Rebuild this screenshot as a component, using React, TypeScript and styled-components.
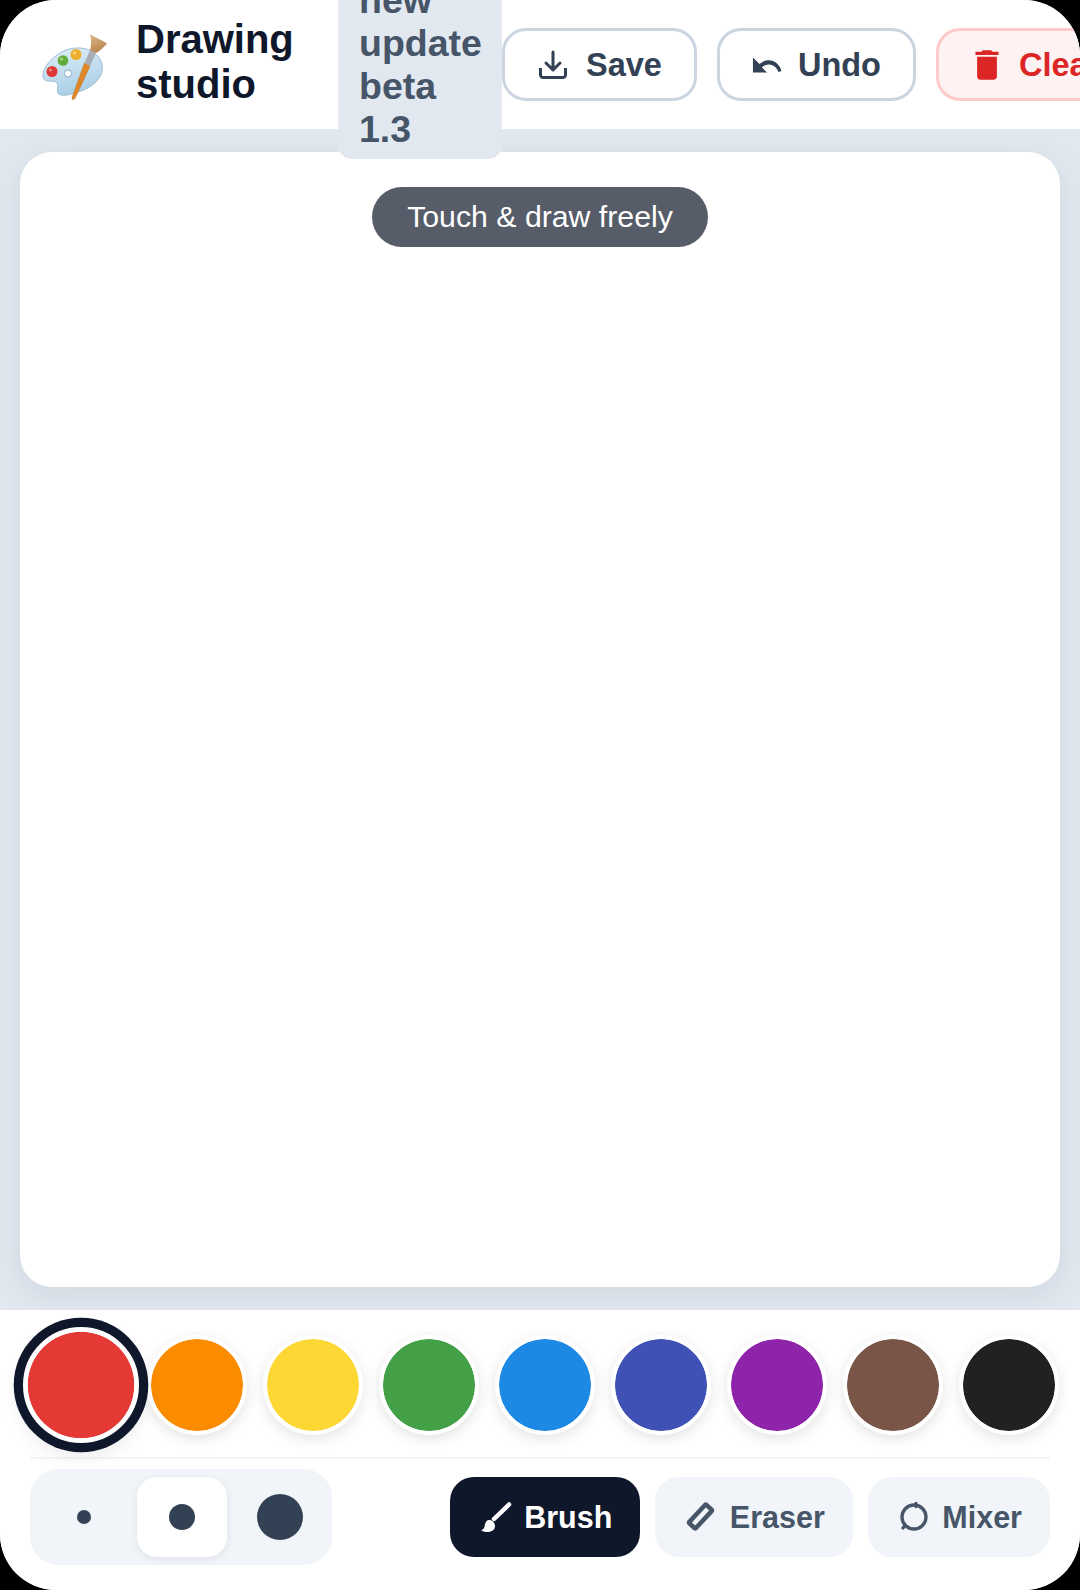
import styled, { createGlobalStyle } from "styled-components";

const colors = ['#e53935', '#fb8c00', '#fdd835', '#43a047', '#1e88e5', '#3f51b5', '#8e24aa', '#795548', '#212121']
const sizes = [14, 26, 46]

// style
const GlobalStyle = createGlobalStyle`
  * {
    box-sizing: border-box;
  }
  html, body {
    margin: 0;
    background: #000;
  }
  body {
    font-family: "Liberation Sans", Arial, sans-serif;
  }
`
const Screen = styled.div`
  display: flex;
  flex-direction: column;
  width: 1080px;
  height: 1590px;
  overflow: hidden;
  border-radius: 56px;
  background: #e2e8f0;
`
const Header = styled.header`
  display: flex;
  flex-shrink: 0;
  align-items: center;
  height: 129px;
  padding-left: 40px;
  background: #fff;
  position: relative;
  z-index: 2;
`
const Brand = styled.div`
  display: flex;
  flex-shrink: 0;
  align-items: center;
  gap: 26px;
  width: 298px;
`
const Title = styled.h1`
  margin: 0 0 5px;
  width: 150px;
  font-size: 40px;
  font-weight: 700;
  color: #0f172a;
`
const Badge = styled.div`
  flex-shrink: 0;
  width: 164px;
  padding: 8px 21px;
  border-radius: 14px;
  background: #e2e8f0;
  font-size: 37.500px;
  line-height: 43px;
  font-weight: 700;
  color: #475569;
`
const Actions = styled.div`
  display: flex;
  flex-shrink: 0;
  gap: 20px;
`
const ActionButton = styled.button<{ $danger?: boolean }>`
  display: flex;
  flex-shrink: 0;
  align-items: center;
  gap: 16px;
  height: 73px;
  padding: 1px 32px 0;
  border: 3px solid ${(p) => (p.$danger ? '#fecaca' : '#cbd5e1')};
  border-radius: 24px;
  background: ${(p) => (p.$danger ? '#fef2f2' : '#fff')};
  font: 700 32.500px "Liberation Sans", Arial, sans-serif;
  color: ${(p) => (p.$danger ? '#dc2626' : '#334155')};
`
const Main = styled.main`
  display: flex;
  flex: 1;
  min-height: 0;
  padding: 23px 20px 23px;
`
const Canvas = styled.div`
  flex: 1;
  display: flex;
  justify-content: center;
  align-items: flex-start;
  padding-top: 35px;
  border-radius: 32px;
  background: #fff;
  box-shadow: 0 8px 32px rgba(15, 23, 42, 0.08);
`
const Hint = styled.div`
  padding: 0 35px;
  height: 60px;
  line-height: 60px;
  border-radius: 30px;
  background: rgba(15, 23, 42, 0.7);
  font-size: 30.250px;
  color: #fff;
`
const Toolbar = styled.section`
  flex-shrink: 0;
  height: 280px;
  padding: 25px 30px 0;
  background: #fff;
  position: relative;
`
const Swatches = styled.div`
  display: flex;
  gap: 16px;
  height: 100px;
  margin-left: 1px;
`
const Swatch = styled.button<{ $color: string; $active?: boolean }>`
  flex-shrink: 0;
  width: 100px;
  height: 100px;
  padding: 0;
  border: 4.500px solid #fff;
  border-radius: 50%;
  background: ${(p) => p.$color};
  background-clip: padding-box;
  box-shadow: ${(p) => (p.$active ? '0 0 0 8px #0f172a, 0 8px 20px rgba(0, 0, 0, 0.12)' : '0 4px 14px rgba(0, 0, 0, 0.11)')};
  transform: ${(p) => (p.$active ? 'scale(1.16)' : 'none')};
`
const Controls = styled.div`
  display: flex;
  align-items: center;
  justify-content: space-between;
  margin-top: 22px;
  padding-top: 10px;
  border-top: 2px solid #f1f5f9;
`
const SizeGroup = styled.div`
  display: flex;
  gap: 8px;
  padding: 8px 7px 8px 9px;
  border-radius: 28px;
  background: #f1f5f9;
`
const SizeButton = styled.button<{ $active?: boolean }>`
  display: flex;
  align-items: center;
  justify-content: center;
  width: 90px;
  height: 80px;
  padding: 0;
  border: 0;
  border-radius: 20px;
  background: ${(p) => (p.$active ? '#fff' : 'transparent')};
  box-shadow: ${(p) => (p.$active ? '0 2px 8px rgba(0, 0, 0, 0.08)' : 'none')};
`
const Dot = styled.span<{ $size: number }>`
  width: ${(p) => p.$size}px;
  height: ${(p) => p.$size}px;
  border-radius: 50%;
  background: #334155;
`
const Tools = styled.div`
  display: flex;
  gap: 15px;
`
const ToolButton = styled.button<{ $active?: boolean }>`
  display: flex;
  align-items: center;
  gap: 12.500px;
  height: 80px;
  padding: 0 28px 0 30px;
  border: 0;
  border-radius: 24px;
  background: ${(p) => (p.$active ? '#0f172a' : '#f1f5f9')};
  font: 700 30.500px "Liberation Sans", Arial, sans-serif;
  color: ${(p) => (p.$active ? '#fff' : '#475569')};
`

const PaletteLogo = () => (
  <svg width="70" height="70" viewBox="8 10 70 70" aria-hidden="true">
    <defs>
      <linearGradient id="palette-body" x1="0.300" y1="0" x2="0.600" y2="1">
        <stop offset="0" stopColor="#dcedf7" />
        <stop offset="1" stopColor="#a6cde5" />
      </linearGradient>
      <linearGradient id="brush-hair" x1="0" y1="0" x2="0.300" y2="1">
        <stop offset="0" stopColor="#dcb88c" />
        <stop offset="1" stopColor="#b98651" />
      </linearGradient>
    </defs>
    <path d="M11 57C10 48 20 36 34 30 48 25 66 29 70 44 73 57 60 68 46 72 38 75 28 77 26 73 24 69 28 64 24 62 20 60 12 63 11 57Z" fill="url(#palette-body)" stroke="#9dbdd4" strokeWidth="1" />
    <circle cx="36" cy="53.500" r="3.600" fill="#fff" stroke="#8aa9c0" strokeWidth="1" />
    <circle cx="20" cy="51.500" r="5.500" fill="#dd3a36" />
    <circle cx="18.500" cy="50" r="1.500" fill="#f28a85" />
    <circle cx="31" cy="40.500" r="5.300" fill="#62ad39" />
    <circle cx="29.500" cy="39" r="1.500" fill="#a7d67f" />
    <circle cx="44" cy="34.500" r="5.500" fill="#eeae2c" />
    <circle cx="42.500" cy="33" r="1.600" fill="#f9da86" />
    <path d="M52.500 43L58 46 43 78.500 40.500 79.800 40 77.500Z" fill="#e0872a" stroke="#c26f1c" strokeWidth="0.500" />
    <path d="M58 30L64 33 58 46 52.500 43Z" fill="#a7adb4" />
    <path d="M58 30C59.500 25 59.500 19 58 14.500 63 17 70 20 75 23.500 72 27 68 31 64 33Z" fill="url(#brush-hair)" />
  </svg>
)

const SaveIcon = () => (
  <svg width="33" height="32" viewBox="0 0 33 32" fill="none" stroke="currentColor" strokeWidth="3" strokeLinejoin="round" aria-hidden="true">
    <path d="M3.500 19v7a2.500 2.500 0 0 0 2.500 2.500h20a2.500 2.500 0 0 0 2.500-2.500v-7" />
    <path d="M16 3v18M9 14l7 7 7-7" strokeLinecap="round" />
  </svg>
)
const UndoIcon = () => (
  <svg width="30" height="30" viewBox="0 0 32 32" fill="currentColor" aria-hidden="true">
    <path d="M1 8v16h15l-5.500-5.500c2.500-2.300 5.200-3.200 8-3 4.600.4 8 3.500 9.700 8l3.300-1.200C29.300 15.500 24.500 11 18 11c-3.700 0-7 1.300-10 4z" />
  </svg>
)
const TrashIcon = () => (
  <svg width="32" height="36" viewBox="2.300 1.100 19.400 21.800" fill="currentColor" aria-hidden="true">
    <path d="M6 19c0 1.100.9 2 2 2h8c1.100 0 2-.9 2-2V7H6v12zM19 4h-3.500l-1-1h-5l-1 1H5v2h14V4z" />
  </svg>
)
const BrushIcon = () => (
  <svg width="32" height="32" viewBox="0 0 32 32" fill="none" aria-hidden="true">
    <path d="M29 3.500L14 18" stroke="currentColor" strokeWidth="4.500" strokeLinecap="round" />
    <path d="M9 19c3.200 0 6 2.700 6 6 0 3.700-3.200 6-7.500 6-2.700 0-5-.6-6.500-2 2 0 3-1.200 3.500-3.500C5 22 6.500 19 9 19z" fill="currentColor" />
  </svg>
)
const EraserIcon = () => (
  <svg width="32" height="32" viewBox="0 0 32 32" fill="none" stroke="currentColor" strokeWidth="4.500" strokeLinejoin="round" aria-hidden="true">
    <rect x="3" y="11" width="25" height="9" rx="1" transform="rotate(-47 15.500 15.500)" />
  </svg>
)
const MixerIcon = () => (
  <svg width="32" height="32" viewBox="0 0 32 32" fill="none" stroke="currentColor" strokeWidth="3.300" strokeLinecap="round" aria-hidden="true">
    <circle cx="16" cy="16" r="12" />
    <path d="M18 2.500v3M5 27l1.500-2" />
  </svg>
)

function App() {
  return (
    <Screen>
      <GlobalStyle />
      <Header>
        <Brand>
          <PaletteLogo />
          <Title>Drawing studio</Title>
        </Brand>
        <Badge>new update beta 1.3</Badge>
        <Actions>
          <ActionButton><SaveIcon />Save</ActionButton>
          <ActionButton><UndoIcon />Undo</ActionButton>
          <ActionButton $danger><TrashIcon />Clear</ActionButton>
        </Actions>
      </Header>
      <Main>
        <Canvas>
          <Hint>Touch &amp; draw freely</Hint>
        </Canvas>
      </Main>
      <Toolbar>
        <Swatches>
          {colors.map((color, index) =>
            <Swatch key={color} $color={color} $active={index === 0} />
          )}
        </Swatches>
        <Controls>
          <SizeGroup>
            {sizes.map((size, index) =>
              <SizeButton key={size} $active={index === 1}><Dot $size={size} /></SizeButton>
            )}
          </SizeGroup>
          <Tools>
            <ToolButton $active><BrushIcon />Brush</ToolButton>
            <ToolButton><EraserIcon />Eraser</ToolButton>
            <ToolButton><MixerIcon />Mixer</ToolButton>
          </Tools>
        </Controls>
      </Toolbar>
    </Screen>
  )
}

export default App
